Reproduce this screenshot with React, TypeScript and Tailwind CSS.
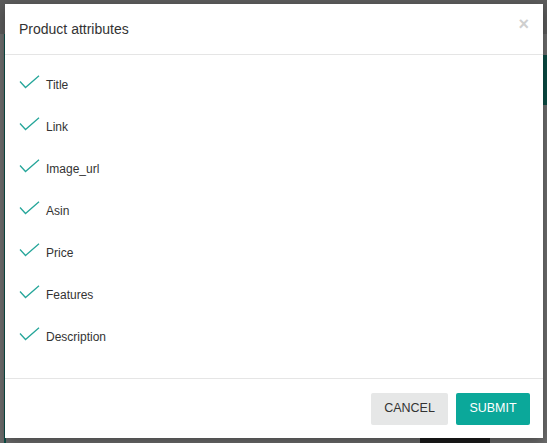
import React from 'react'

const attributes = ['Title', 'Link', 'Image_url', 'Asin', 'Price', 'Features', 'Description']

function Check() {
  return (
    <svg width="21" height="14" viewBox="0 0 21 14" className="shrink-0">
      <path d="M1 6.5 L6.5 12.5 L20 0.8" fill="none" stroke="#26a69a" strokeWidth="1.3" />
    </svg>
  )
}

export default function App() {
  return (
    <div
      className="relative h-[443px] w-[547px] overflow-hidden bg-[#6e6e6e]"
      style={{ fontFamily: '"Liberation Sans", Arial, sans-serif' }}
    >
      {/* dimmed page behind the dialog */}
      <div className="h-[34px] bg-[#5c5c5c]" />
      <div className="absolute left-[4px] top-[34px] h-[409px] w-[2px] bg-[#0d4f48]" />
      <div className="absolute right-0 top-[55px] h-[50px] w-[6px] bg-[#0b4d45]" />
      <div className="absolute bottom-0 left-[420px] h-[8px] w-[70px] bg-[#1c1c1c]" />

      {/* dialog */}
      <div className="absolute left-[5px] top-[4px] flex h-[434px] w-[538px] flex-col bg-white shadow-[0_4px_12px_rgba(0,0,0,0.35)]">
        <div className="relative flex h-[51px] shrink-0 items-center border-b border-[#e5e5e5] px-[14px]">
          <h3 className="text-[14px] text-[#333]">Product attributes</h3>
          <span className="absolute right-[14px] top-[11px] text-[18px] font-bold leading-none text-[#cfcfcf]">×</span>
        </div>

        <div className="flex-1 px-[14px] pt-[9px]">
          {attributes.map(attr => (
            <div key={attr} className="flex h-[42px] items-center gap-[6px]">
              <div className="-mt-[6px]">
                <Check />
              </div>
              <span className="text-[12px] text-[#333]">{attr}</span>
            </div>
          ))}
        </div>

        <div className="flex h-[60px] shrink-0 items-center justify-end gap-[8px] border-t border-[#e5e5e5] pr-[13px]">
          <button className="h-[32px] w-[77px] rounded-[2px] bg-[#e6e7e7] text-[12.5px] text-[#333]">CANCEL</button>
          <button className="h-[32px] w-[74px] rounded-[2px] bg-[#0ba89a] text-[12.5px] text-white">SUBMIT</button>
        </div>
      </div>
    </div>
  )
}
